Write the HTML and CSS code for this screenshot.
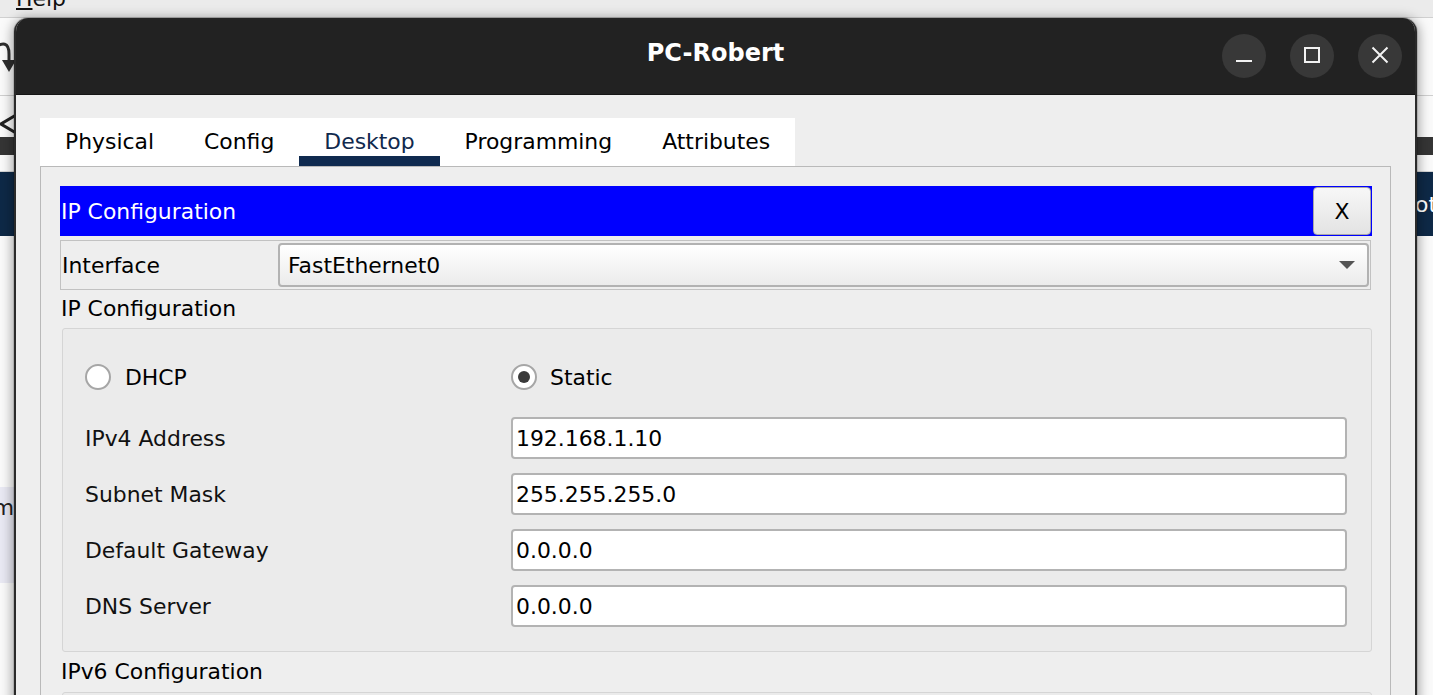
FILE: index.html
```html
<!DOCTYPE html>
<html>
<head>
<meta charset="utf-8">
<title>PC-Robert</title>
<link rel="stylesheet" href="styles.css">
</head>
<body>
<div class="app">
  <div class="menubar"><span class="menu-item"><u>H</u>elp</span></div>
  <div class="toolbar">
    <svg class="redo-icon" width="16" height="34" viewBox="0 0 16 34">
      <path d="M-8 9 Q9 -3 9 14 L9 22" fill="none" stroke="#2e2e2e" stroke-width="3"/>
      <path d="M2 20 L16 20 L9 32 Z" fill="#2e2e2e"/>
    </svg>
  </div>
  <div class="toolbar2">
    <div class="chev-row">
      <svg width="16" height="22" viewBox="0 0 16 22"><path d="M16 2 L1 11 L16 20" fill="none" stroke="#222" stroke-width="3"/></svg>
    </div>
    <div class="dark-band"></div>
  </div>
  <div class="spacer"></div>
  <div class="navband"><span class="nav-text">ot</span></div>
  <div class="workspace">
    <div class="lav-block"><span class="lav-text">m</span></div>
  </div>
</div>

<div class="window">
  <div class="titlebar">
    <div></div>
    <div class="title">PC-Robert</div>
    <div class="winbtns">
      <div class="winbtn">
        <svg width="44" height="44" viewBox="0 0 44 44"><path d="M14 27 H30" stroke="#f2f2f2" stroke-width="2"/></svg>
      </div>
      <div class="winbtn">
        <svg width="44" height="44" viewBox="0 0 44 44"><rect x="15" y="14" width="14" height="14" fill="none" stroke="#f2f2f2" stroke-width="2"/></svg>
      </div>
      <div class="winbtn">
        <svg width="44" height="44" viewBox="0 0 44 44"><path d="M14.5 13.5 L29.5 28.5 M29.5 13.5 L14.5 28.5" stroke="#f2f2f2" stroke-width="2"/></svg>
      </div>
    </div>
  </div>
  <div class="winbody">
    <div class="tabs">
      <div class="tab">Physical</div>
      <div class="tab">Config</div>
      <div class="tab active">Desktop</div>
      <div class="tab">Programming</div>
      <div class="tab">Attributes</div>
    </div>
    <div class="panel">
      <div class="ip-header">
        <span class="ip-title">IP Configuration</span>
        <div class="close-btn">X</div>
      </div>
      <div class="iface-row">
        <span class="iface-label">Interface</span>
        <div class="combo">
          <span>FastEthernet0</span>
          <span class="combo-arrow"></span>
        </div>
      </div>
      <div class="section-label">IP Configuration</div>
      <div class="group">
        <div class="radio-cell">
          <span class="radio"></span><span>DHCP</span>
        </div>
        <div class="radio-cell static">
          <span class="radio checked"></span><span>Static</span>
        </div>
        <div class="field-label">IPv4 Address</div>
        <div class="field">192.168.1.10</div>
        <div class="field-label">Subnet Mask</div>
        <div class="field">255.255.255.0</div>
        <div class="field-label">Default Gateway</div>
        <div class="field">0.0.0.0</div>
        <div class="field-label">DNS Server</div>
        <div class="field">0.0.0.0</div>
      </div>
      <div class="section-label v6">IPv6 Configuration</div>
      <div class="group6"></div>
    </div>
  </div>
</div>
</body>
</html>
```

FILE: styles.css
```css
* { box-sizing: border-box; }
html, body { margin: 0; padding: 0; }
body {
  width: 1433px;
  height: 695px;
  overflow: hidden;
  position: relative;
  background: #ffffff;
  font-family: "DejaVu Sans", "Liberation Sans", sans-serif;
  font-size: 21.9px;
  color: #000;
}

/* background application */
.app { display: flex; flex-direction: column; height: 695px; }
.app > * { flex-shrink: 0; }
.menubar {
  height: 18px;
  background: #ebebeb;
  border-bottom: 1px solid #d0d0d0;
  padding-left: 16px;
  overflow: hidden;
  line-height: 18px;
}
.menu-item { display: block; margin-top: -10px; color: #111; }
.toolbar { height: 77px; background: #fafafa; }
.redo-icon { display: block; margin-top: 22px; }
.toolbar2 { height: 60px; border-top: 1px solid #cfcfcf; background: #fafafa; display: flex; flex-direction: column; }
.chev-row { height: 41px; padding-top: 17px; }
.chev-row svg { display: block; }
.dark-band { flex: 1; background: #353535; }
.spacer { height: 17px; background: #fafafa; border-bottom: 1px solid #d5d5d5; }
.navband {
  height: 64px;
  background: #0e2947;
  color: #fff;
  display: flex;
  justify-content: flex-end;
  align-items: center;
  overflow: hidden;
}
.nav-text { margin-right: -4px; }
.workspace { flex: 1 1 auto !important; background: #fafafa; padding-top: 251px; }
.lav-block {
  width: 14px;
  height: 96px;
  background: #e9e9f3;
  display: flex;
  justify-content: flex-end;
  overflow: hidden;
  padding-top: 8px;
  color: #222;
}

/* window */
.window {
  position: absolute;
  left: 14px;
  top: 18px;
  width: 1403px;
  height: 700px;
  border: 2px solid #2a2a2a;
  border-top: none;
  border-bottom: none;
  border-radius: 14px 14px 0 0;
  background: #eeeeee;
  box-shadow: 0 0 0 1px rgba(0,0,0,0.12), 0 2px 12px 2px rgba(0,0,0,0.35);
  overflow: hidden;
  display: flex;
  flex-direction: column;
}
.window > * { flex-shrink: 0; }
.titlebar {
  height: 77px;
  background: #222222;
  border-bottom: 1px solid #151515;
  display: grid;
  grid-template-columns: 1fr auto 1fr;
  align-items: center;
}
.title {
  color: #ffffff;
  font-family: "DejaVu Sans", sans-serif;
  font-weight: bold;
  font-size: 24px;
  margin-top: -6px;
}
.winbtns { display: flex; justify-content: flex-end; gap: 24px; padding-right: 13px; }
.winbtn {
  width: 44px;
  height: 44px;
  border-radius: 50%;
  background: #383838;
}
.winbtn svg { display: block; }

.winbody { flex: 1 1 auto !important; padding: 23px 24px 0 24px; background: #eeeeee; display: flex; flex-direction: column; }
.winbody > * { flex-shrink: 0; }
.tabs { display: flex; align-self: flex-start; background: #ffffff; height: 48px; }
.tab { padding: 0 25px; line-height: 48px; color: #000; }
.tab.active { color: #10294d; box-shadow: inset 0 -10px 0 #0f2a4f; }

.panel {
  flex: 1 1 auto !important;
  border: 1px solid #b9b9b9;
  border-bottom: none;
  padding: 19px 18px 0 19px;
  display: flex;
  flex-direction: column;
}
.panel > * { flex-shrink: 0; }
.ip-header {
  height: 50px;
  background: #0000ff;
  color: #ffffff;
  display: flex;
  align-items: center;
  justify-content: space-between;
  padding-left: 1px;
}
.close-btn {
  width: 58px;
  height: 48px;
  margin-right: 1px;
  border: 1px solid #a9a9a9;
  border-radius: 4px;
  background: linear-gradient(#f7f7f7, #e3e3e3);
  color: #000;
  display: flex;
  align-items: center;
  justify-content: center;
}
.iface-row {
  margin-top: 4px;
  margin-right: 1px;
  height: 50px;
  border: 1px solid #c2c2c2;
  display: flex;
  align-items: center;
  padding-left: 1px;
  padding-right: 1px;
}
.iface-label { width: 216px; }
.combo {
  flex: 1;
  height: 44px;
  border: 2px solid #b2b2b2;
  border-radius: 4px;
  background: linear-gradient(#ffffff, #ebebeb);
  display: flex;
  align-items: center;
  justify-content: space-between;
  padding: 0 12px 0 8px;
}
.combo-arrow {
  width: 0;
  height: 0;
  border-left: 8px solid transparent;
  border-right: 8px solid transparent;
  border-top: 8px solid #555;
}
.section-label { height: 38px; line-height: 38px; padding-left: 1px; }
.section-label.v6 { height: 40px; line-height: 40px; }
.group {
  margin-left: 2px;
  height: 324px;
  border: 1px solid #d5d5d5;
  border-radius: 3px;
  background: #ebebeb;
  padding: 27px 24px 24px 22px;
  display: grid;
  grid-template-columns: 426px 1fr;
  grid-template-rows: 47px repeat(4, 42px);
  row-gap: 14px;
}
.radio-cell { display: flex; align-items: center; gap: 14px; height: 42px; align-self: start; }
.radio-cell.static { gap: 13px; }
.radio {
  width: 26px;
  height: 26px;
  border-radius: 50%;
  border: 2px solid #a6a6a6;
  background: #ffffff;
  display: flex;
  align-items: center;
  justify-content: center;
}
.radio.checked::after {
  content: "";
  width: 12px;
  height: 12px;
  border-radius: 50%;
  background: #3a3a3a;
}
.field-label { display: flex; align-items: center; color: #111; }
.field {
  height: 42px;
  border: 2px solid #b3b3b3;
  border-radius: 4px;
  background: #ffffff;
  padding-left: 3px;
  display: flex;
  align-items: center;
}
.group6 {
  margin-left: 2px;
  height: 60px;
  border: 1px solid #d5d5d5;
  border-radius: 3px;
  background: #ebebeb;
}
```
